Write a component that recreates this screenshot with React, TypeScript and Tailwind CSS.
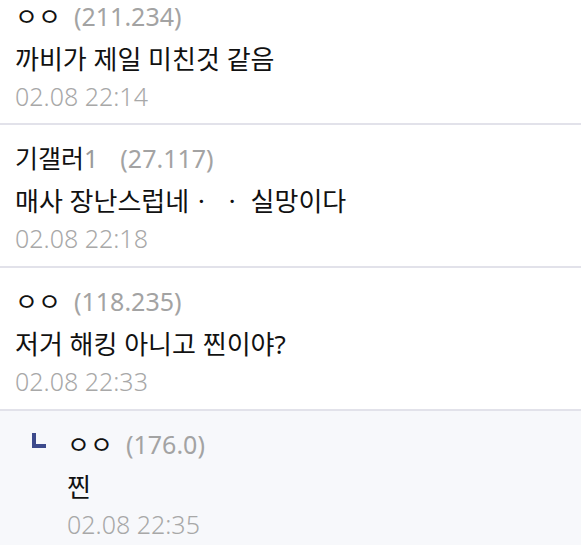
const font = { fontFamily: '"Noto Sans", "Noto Sans CJK KR", sans-serif' };

type Comment = {
  name: string;
  suffix?: string;
  ip: string;
  body: string;
  date: string;
};

const comments: Comment[] = [
  { name: "ㅇㅇ", ip: "(211.234)", body: "까비가 제일 미친것 같음", date: "02.08 22:14" },
  { name: "기갤러", suffix: "1", ip: "(27.117)", body: "매사 장난스럽네ㆍ ㆍ 실망이다", date: "02.08 22:18" },
  { name: "ㅇㅇ", ip: "(118.235)", body: "저거 해킹 아니고 찐이야?", date: "02.08 22:33" },
];

function CommentBody({ c, first }: { c: Comment; first?: boolean }) {
  return (
    <div className="flex flex-col">
      <div
        className={
          first
            ? "flex items-center h-[32px] text-[25px] leading-[32px]"
            : "flex items-center h-[36px] text-[25px] leading-[36px]"
        }
      >
        <span className="text-[#111]">{c.name}</span>
        {c.suffix && <span className="text-[#9a9a9a]">{c.suffix}</span>}
        <span className={c.suffix ? "ml-[22px] text-[#a3a3a3]" : "ml-[13px] text-[#a3a3a3]"}>{c.ip}</span>
      </div>
      <div className={first ? "mt-[9px] h-[36px] text-[26px] leading-[36px] text-[#111]" : "mt-[7px] h-[36px] text-[26px] leading-[36px] text-[#111]"}>
        {c.body}
      </div>
      <div className="mt-[1px] h-[36px] text-[25px] leading-[36px] font-light text-[#a8a8a8]">{c.date}</div>
    </div>
  );
}

export default function App() {
  return (
    <div className="w-[581px] h-[545px] overflow-hidden bg-white" style={font}>
      {comments.map((c, i) => (
        <div
          key={i}
          className={i === 0 ? "pl-[15px] pt-0 pb-[9px] border-b-2 border-[#e2e2ea]" : "pl-[15px] pt-[15px] pb-[10px] border-b-2 border-[#e2e2ea]"}
        >
          <CommentBody c={c} first={i === 0} />
        </div>
      ))}
      <div className="flex bg-[#f7f8fb] pl-[32px] pt-[15px] pb-[10px]">
        <div className="pt-[7px] w-[35px]">
          <svg width="14" height="15" viewBox="0 0 14 15">
            <path d="M0 0h4v11h10v4H0z" fill="#3d4a8c" />
          </svg>
        </div>
        <CommentBody c={{ name: "ㅇㅇ", ip: "(176.0)", body: "찐", date: "02.08 22:35" }} />
      </div>
    </div>
  );
}
